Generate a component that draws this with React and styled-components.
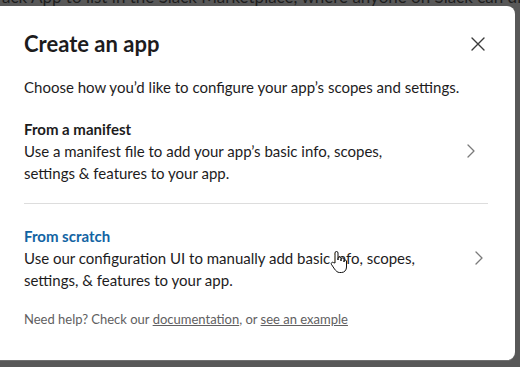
import styled, { createGlobalStyle } from "styled-components";

const GlobalStyle = createGlobalStyle`
  html, body {
    margin: 0;
    height: 100%;
    overflow: hidden;
  }
  body {
    background-color: #585858;
    font-family: Lato, "Noto Sans", sans-serif;
    -webkit-font-smoothing: antialiased;
  }
`;

const Backdrop = styled.div`
  display: flex;
  flex-direction: column;
  height: 367px;
`;

const BehindText = styled.div`
  height: 6px;
  overflow: hidden;
  display: flex;
  align-items: flex-end;
  padding-left: 2px;
  flex-shrink: 0;

  & span {
    font-size: 17px;
    line-height: 19px;
    color: #1e1e1e;
    white-space: nowrap;
  }
`;

const Modal = styled.div`
  position: relative;
  margin-left: -8px;
  width: 523px;
  height: 354px;
  background-color: #ffffff;
  border-radius: 8px;
  box-shadow: 0 1px 0 rgba(255, 255, 255, 0.15);
  display: flex;
  flex-direction: column;
  color: #1d1c1d;
`;

const Header = styled.div`
  display: flex;
  align-items: center;
  justify-content: space-between;
  padding: 20px 19px 0 32px;
`;

const Title = styled.h1`
  margin: 0;
  font-size: 22px;
  font-weight: 700;
  line-height: 32px;
  color: #1d1c1d;
`;

const CloseButton = styled.button`
  width: 36px;
  height: 36px;
  display: flex;
  align-items: center;
  justify-content: center;
  background: transparent;
  border: none;
  border-radius: 4px;
  color: #3b3b3b;
  cursor: pointer;
  padding: 0;
`;

const Body = styled.div`
  display: flex;
  flex-direction: column;
  padding: 0 27px 0 32px;
`;

const Intro = styled.p`
  margin: 14px 0 0;
  font-size: 15px;
  line-height: 22px;
  color: #1d1c1d;
`;

const Option = styled.div`
  display: flex;
  align-items: center;
  justify-content: space-between;
  padding: ${(p) => (p.$first ? "20px" : "21px")} 0 19px;
  cursor: pointer;
  border-bottom: ${(p) => (p.$last ? "none" : "1px solid #dddddd")};
`;

const OptionText = styled.div`
  width: 404px;
`;

const OptionTitle = styled.div`
  font-size: 15px;
  font-weight: 700;
  line-height: 22px;
  color: ${(p) => (p.$hover ? "#1264a3" : "#1d1c1d")};
`;

const OptionDesc = styled.div`
  font-size: 15px;
  line-height: 22px;
  color: #1d1c1d;
`;

const Chevron = styled.span`
  display: flex;
  color: #7a7a7a;
  margin-right: 13px;
  transform: translateX(${(p) => (p.$hover ? "8px" : "0")});
`;

const Footer = styled.div`
  font-size: 13px;
  line-height: 18px;
  color: #616061;

  & a {
    color: #616061;
    text-decoration: underline;
  }
`;

const Cursor = styled.svg`
  position: absolute;
  left: 338px;
  top: 244px;
  pointer-events: none;
`;

const ChevronIcon = () => (
  <svg width="8" height="14" viewBox="0 0 8 14" fill="none">
    <path d="M1 1l6 6-6 6" stroke="currentColor" strokeWidth="1.3" strokeLinecap="round" strokeLinejoin="round" />
  </svg>
);

const options = [
  {
    title: "From a manifest",
    desc: "Use a manifest file to add your app’s basic info, scopes, settings & features to your app.",
  },
  {
    title: "From scratch",
    desc: "Use our configuration UI to manually add basic info, scopes, settings, & features to your app.",
    hover: true,
  },
];

export default function App() {
  return (
    <>
      <GlobalStyle />
      <Backdrop>
        <BehindText>
          <span>ack App to list in the Slack Marketplace, where anyone on Slack can discover</span>
        </BehindText>
        <Modal>
          <Header>
            <Title>Create an app</Title>
            <CloseButton aria-label="Close">
              <svg width="14" height="14" viewBox="0 0 14 14">
                <path d="M1 1l12 12M13 1L1 13" stroke="currentColor" strokeWidth="1.4" strokeLinecap="round" />
              </svg>
            </CloseButton>
          </Header>
          <Body>
            <Intro>Choose how you’d like to configure your app’s scopes and settings.</Intro>
            {options.map((o, i) => (
              <Option key={o.title} $first={i === 0} $last={i === options.length - 1}>
                <OptionText>
                  <OptionTitle $hover={o.hover}>{o.title}</OptionTitle>
                  <OptionDesc>{o.desc}</OptionDesc>
                </OptionText>
                <Chevron $hover={o.hover}>
                  <ChevronIcon />
                </Chevron>
              </Option>
            ))}
            <Footer>
              Need help? Check our <a href="#">documentation</a>, or <a href="#">see an example</a>
            </Footer>
          </Body>
          <Cursor width="17" height="24" viewBox="0 0 17 24">
            <path
              d="M5 13V3a1.5 1.5 0 0 1 3 0v7V8.5a1.5 1.5 0 0 1 3 0V11V9.5a1.5 1.5 0 0 1 3 0V12v-1a1.3 1.3 0 0 1 2.5 0v6c0 3-2 5.5-5 5.5H9.5C7.5 22.5 6 21 4.5 19L1.3 14.2a1.4 1.4 0 0 1 2.2-1.6z"
              fill="#fff"
              stroke="#111"
              strokeWidth="1"
              strokeLinejoin="round"
            />
          </Cursor>
        </Modal>
      </Backdrop>
    </>
  );
}
